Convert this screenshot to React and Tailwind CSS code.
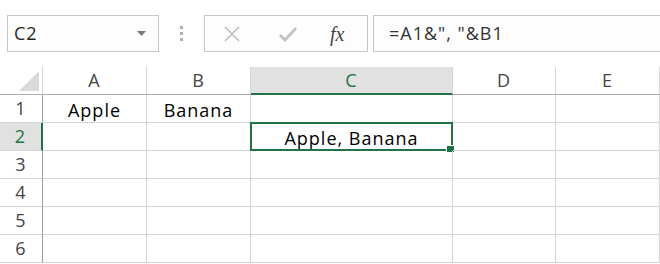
import React from "react";

const cols = [
  { key: "A", w: "w-[104px]" },
  { key: "B", w: "w-[104px]" },
  { key: "C", w: "w-[202px]" },
  { key: "D", w: "w-[103px]" },
  { key: "E", w: "w-[104px]" },
];

const data = {
  "A1": "Apple",
  "B1": "Banana",
  "C2": "Apple, Banana",
};

function FormulaBar() {
  return (
    <div className="flex items-center h-[67px] pb-[15px] pt-[15px] bg-white">
      {/* Name box */}
      <div className="ml-[7px] w-[152px] h-[37px] border border-[#c6c6c6] bg-[#fdfdfd] flex items-center pl-[6px] pr-[12px] justify-between">
        <span className="text-[18px] tracking-[1px] text-[#262626]">C2</span>
        <svg width="9" height="5" viewBox="0 0 9 5">
          <path d="M0 0 H9 L4.5 5 Z" fill="#7a7a7a" />
        </svg>
      </div>

      {/* divider dots */}
      <div className="w-[45px] flex flex-col items-center gap-[3px]">
        <span className="w-[3px] h-[3px] bg-[#b0b0b0]" />
        <span className="w-[3px] h-[3px] bg-[#b0b0b0]" />
        <span className="w-[3px] h-[3px] bg-[#b0b0b0]" />
      </div>

      {/* cancel / enter / fx */}
      <div className="w-[164px] h-[37px] border border-[#c6c6c6] bg-[#fdfdfd] flex items-center pl-[18px]">
        <svg width="18" height="18" viewBox="0 0 18 18" className="mr-[37px]">
          <path d="M2 2 L16 16 M16 2 L2 16" stroke="#bdbdbd" strokeWidth="1.6" />
        </svg>
        <svg width="20" height="16" viewBox="0 0 20 16" className="mr-[32px]">
          <path d="M2 9 L7 14 L18 2" stroke="#c2c2c2" strokeWidth="2.6" fill="none" />
        </svg>
        <span className="text-[20px] italic text-[#444] font-['Liberation_Serif',serif]">fx</span>
      </div>

      {/* formula input */}
      <div className="ml-[5px] flex-1 h-[37px] border border-r-0 border-[#c6c6c6] bg-[#fdfdfd] flex items-center pl-[15px]">
        <span className="text-[18px] tracking-[1px] text-[#333]">=A1&amp;", "&amp;B1</span>
      </div>
    </div>
  );
}

function Grid() {
  const rows = [1, 2, 3, 4, 5, 6];
  return (
    <div className="flex flex-col tracking-[1px]">
      {/* header row */}
      <div className="flex h-[28px]">
        <div className="w-[43px] border-r border-b border-r-[#d4d4d4] border-b-[#ababab] flex items-end justify-end pr-[3px] pb-[3px]">
          <svg width="20" height="20" viewBox="0 0 20 20">
            <path d="M20 0 L20 20 L0 20 Z" fill="#dadada" />
          </svg>
        </div>
        {cols.map((c) =>
          c.key === "C" ? (
            <div
              key={c.key}
              className={`${c.w} bg-[#e1e1e1] border-r border-r-[#d4d4d4] border-b-2 border-b-[#217346] flex items-center justify-center text-[18px] text-[#217346]`}
            >
              {c.key}
            </div>
          ) : (
            <div
              key={c.key}
              className={`${c.w} border-r border-r-[#d4d4d4] border-b border-b-[#ababab] flex items-center justify-center text-[18px] text-[#444]`}
            >
              {c.key}
            </div>
          )
        )}
      </div>

      {rows.map((r) => (
        <div key={r} className="flex h-[28px]">
          {r === 2 ? (
            <div className="w-[43px] bg-[#e1e1e1] border-r-2 border-r-[#217346] border-b border-b-[#d4d4d4] flex items-center justify-center text-[18px] text-[#217346]">
              {r}
            </div>
          ) : (
            <div className="w-[43px] border-r border-r-[#9e9e9e] border-b border-b-[#d4d4d4] flex items-center justify-center text-[18px] text-[#444]">
              {r}
            </div>
          )}
          {cols.map((c) => {
            const id = c.key + r;
            const selected = id === "C2";
            return (
              <div
                key={id}
                className={`${c.w} relative border-r border-b border-[#d4d4d4] flex items-center justify-center pt-[3px] text-[18px] text-black`}
              >
                {data[id]}
                {selected && (
                  <div className="absolute left-[-1px] top-[-1px] w-[203px] h-[29px] border-2 border-[#217346]">
                    <div className="absolute right-[-4px] bottom-[-4px] w-[7px] h-[6px] bg-[#217346] border border-white box-content" />
                  </div>
                )}
              </div>
            );
          })}
        </div>
      ))}
    </div>
  );
}

export default function App() {
  return (
    <div className="w-[660px] h-[264px] overflow-hidden bg-white font-['Open_Sans',sans-serif]">
      <FormulaBar />
      <Grid />
    </div>
  );
}
